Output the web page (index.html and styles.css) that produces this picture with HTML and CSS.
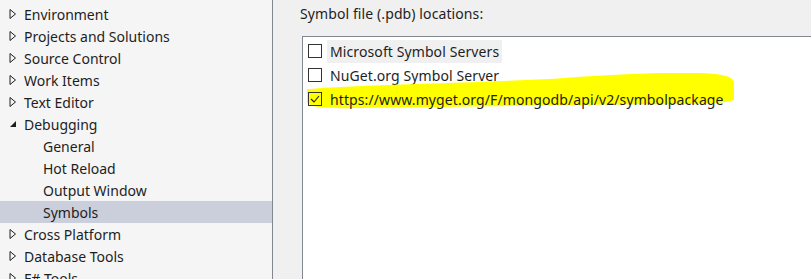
FILE: index.html
```html
<!DOCTYPE html>
<html lang="en">
<head>
    <meta charset="UTF-8">
    <title>Options - Symbols</title>
    <link rel="stylesheet" href="styles.css">
</head>
<body>
    <div class="options">
        <!-- options tree -->
        <div class="tree">
            <div class="tree-item"><svg class="arrow" viewBox="0 0 8 10"><path d="M1 0.5 L6.5 5 L1 9.5 Z" fill="none" stroke="#1e1e1e"/></svg>Environment</div>
            <div class="tree-item"><svg class="arrow" viewBox="0 0 8 10"><path d="M1 0.5 L6.5 5 L1 9.5 Z" fill="none" stroke="#1e1e1e"/></svg>Projects and Solutions</div>
            <div class="tree-item"><svg class="arrow" viewBox="0 0 8 10"><path d="M1 0.5 L6.5 5 L1 9.5 Z" fill="none" stroke="#1e1e1e"/></svg>Source Control</div>
            <div class="tree-item"><svg class="arrow" viewBox="0 0 8 10"><path d="M1 0.5 L6.5 5 L1 9.5 Z" fill="none" stroke="#1e1e1e"/></svg>Work Items</div>
            <div class="tree-item"><svg class="arrow" viewBox="0 0 8 10"><path d="M1 0.5 L6.5 5 L1 9.5 Z" fill="none" stroke="#1e1e1e"/></svg>Text Editor</div>
            <div class="tree-item"><svg class="arrow" viewBox="0 0 8 10"><path d="M7 2 L7 8 L1 8 Z" fill="#1e1e1e"/></svg>Debugging</div>
            <div class="tree-item child">General</div>
            <div class="tree-item child">Hot Reload</div>
            <div class="tree-item child">Output Window</div>
            <div class="tree-item child selected">Symbols</div>
            <div class="tree-item"><svg class="arrow" viewBox="0 0 8 10"><path d="M1 0.5 L6.5 5 L1 9.5 Z" fill="none" stroke="#1e1e1e"/></svg>Cross Platform</div>
            <div class="tree-item"><svg class="arrow" viewBox="0 0 8 10"><path d="M1 0.5 L6.5 5 L1 9.5 Z" fill="none" stroke="#1e1e1e"/></svg>Database Tools</div>
            <div class="tree-item"><svg class="arrow" viewBox="0 0 8 10"><path d="M1 0.5 L6.5 5 L1 9.5 Z" fill="none" stroke="#1e1e1e"/></svg>F# Tools</div>
        </div>

        <!-- symbols page -->
        <div class="panel">
            <div class="panel-label">Symbol file (.pdb) locations:</div>
            <div class="location-list">
                <div class="location focused">
                    <span class="check"></span>
                    <span class="location-name">Microsoft Symbol Servers</span>
                </div>
                <div class="location">
                    <span class="check"></span>
                    <span class="location-name">NuGet.org Symbol Server</span>
                </div>
                <div class="location marked">
                    <svg class="marker" viewBox="0 0 430 40" preserveAspectRatio="none">
                        <path d="M2 17 C40 13 150 11 250 6 C310 1 365 -1 395 0 C420 1 428 4 429 10 L429 28 C425 32 400 33 330 33 C250 34 120 36 40 37 C15 37 4 35 2 31 Z" fill="#ffff00"/>
                    </svg>
                    <span class="check checked"><svg viewBox="0 0 14 14"><path d="M3 7 L6 10 L11 4" fill="none" stroke="#1e1e1e" stroke-width="1.1"/></svg></span>
                    <span class="location-name">https://www.myget.org/F/mongodb/api/v2/symbolpackage</span>
                </div>
            </div>
        </div>
    </div>
</body>
</html>
```

FILE: styles.css
```css
body {
    margin: 0;
    font-family: "Noto Sans", "Open Sans", sans-serif;
    font-size: 14px;
    color: #1e1e1e;
    background: #f0f0f0;
    overflow: hidden;
}

.options {
    display: flex;
    height: 279px;
}

/* left tree */
.tree {
    width: 272px;
    background: #f5f5f5;
    border-right: 1px solid #828790;
    padding-top: 3px;
    overflow: hidden;
}

.tree-item {
    height: 22px;
    display: flex;
    align-items: center;
    padding-left: 9px;
    white-space: nowrap;
}

.tree-item.child {
    padding-left: 43px;
}

.tree-item.selected {
    background: #cbcedb;
}

.arrow {
    width: 8px;
    height: 10px;
    margin-right: 7px;
    flex-shrink: 0;
}

/* right panel */
.panel {
    flex: 1;
    display: flex;
    flex-direction: column;
    padding-left: 27px;
}

.panel-label {
    height: 29px;
    line-height: 28px;
    letter-spacing: 0.1px;
}

.location-list {
    flex: 1;
    margin-top: 7px;
    margin-left: 2px;
    background: #fff;
    border-left: 1px solid #828790;
    border-top: 1px solid #828790;
    padding-top: 2px;
    padding-left: 5px;
}

.location {
    height: 24px;
    display: flex;
    align-items: center;
    position: relative;
}

.check {
    width: 14px;
    height: 14px;
    border: 1px solid #333;
    background: #fff;
    box-sizing: border-box;
    margin-right: 5px;
    flex-shrink: 0;
    position: relative;
}

.check svg {
    width: 14px;
    height: 14px;
    position: absolute;
    left: -1px;
    top: -1px;
}

.check.checked {
    background: transparent;
}

.location-name {
    position: relative;
    white-space: nowrap;
    padding: 0 3px;
    height: 23px;
    line-height: 23px;
    letter-spacing: 0.1px;
}

.location.focused .location-name {
    background: #f0f0f0;
}

/* yellow highlighter mark */
.marker {
    position: absolute;
    left: -3px;
    top: -14px;
    width: 430px;
    height: 38px;
}
```
